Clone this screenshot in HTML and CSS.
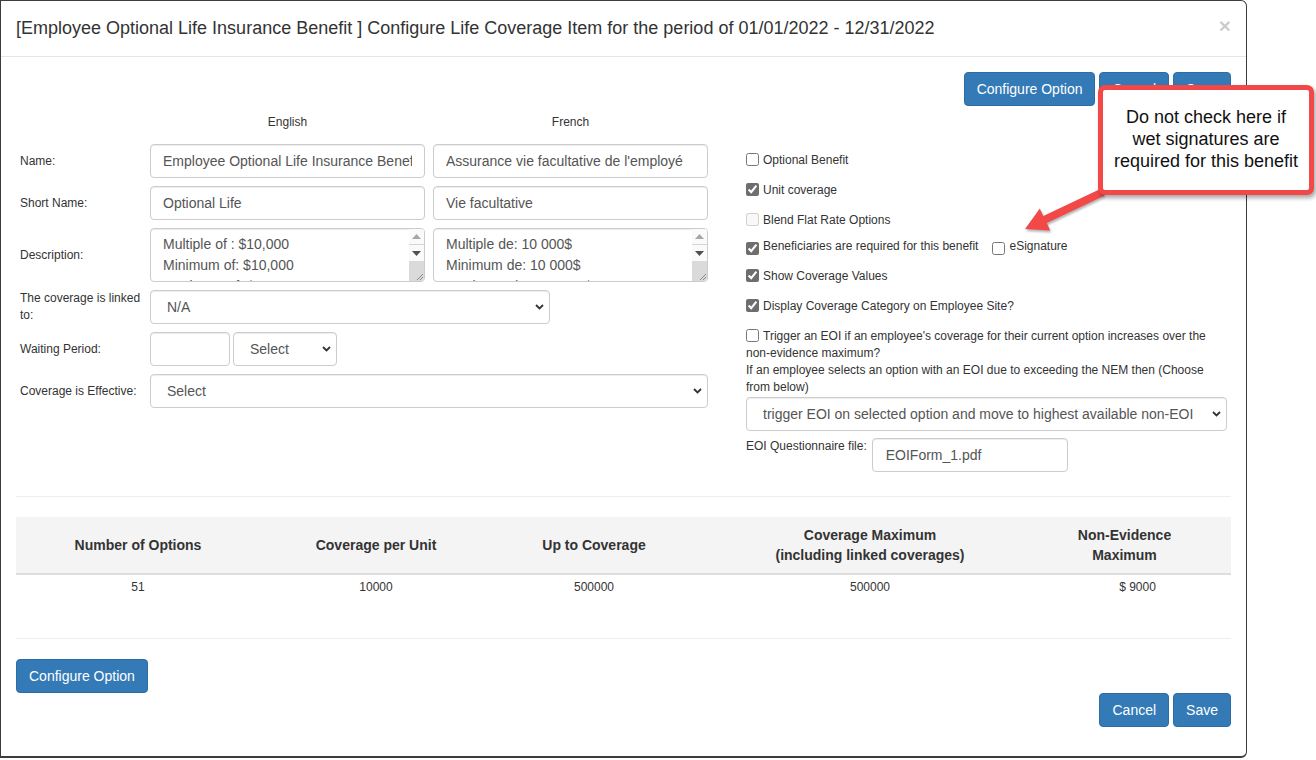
FILE: index.html
```html
<!DOCTYPE html>
<html>
<head>
<meta charset="utf-8">
<link rel="stylesheet" href="styles.css">
</head>
<body>
<div class="modal">
  <div class="modal-header">
    <h4 class="title">[Employee Optional Life Insurance Benefit ] Configure Life Coverage Item for the period of 01/01/2022 - 12/31/2022</h4>
    <span class="close">×</span>
  </div>
  <div class="modal-body">
    <div class="actions">
      <button class="btn">Configure Option</button>
      <button class="btn">Cancel</button>
      <button class="btn">Save</button>
    </div>

    <div class="form-area">
      <div class="left-col">
        <div class="lang-row"><span class="lang">English</span><span class="lang">French</span></div>
        <div class="frow">
          <label class="flabel">Name:</label>
          <input class="fc w275" type="text" value="Employee Optional Life Insurance Benefit">
          <input class="fc w275" type="text" value="Assurance vie facultative de l'employé">
        </div>
        <div class="frow">
          <label class="flabel">Short Name:</label>
          <input class="fc w275" type="text" value="Optional Life">
          <input class="fc w275" type="text" value="Vie facultative">
        </div>
        <div class="frow">
          <label class="flabel">Description:</label>
          <div class="ta">
            <div class="ta-text">Multiple of : $10,000
Minimum of: $10,000
Maximum of: $500,000</div>
            <div class="sb">
              <div class="sb-btn"><svg width="9" height="5" viewBox="0 0 9 5"><path d="M0 5 L4.5 0 L9 5 Z" fill="#a6a6a6"/></svg></div>
              <div class="sb-btn sb-down"><svg width="9" height="5" viewBox="0 0 9 5"><path d="M0 0 L9 0 L4.5 5 Z" fill="#505050"/></svg></div>
              <div class="sb-thumb"><svg width="8" height="8" viewBox="0 0 8 8"><path d="M1 7 L7 1 M4 7 L7 4" stroke="#8a8a8a" stroke-width="1"/></svg></div>
            </div>
          </div>
          <div class="ta">
            <div class="ta-text">Multiple de: 10 000$
Minimum de: 10 000$
Maximum de: 500 000$</div>
            <div class="sb">
              <div class="sb-btn"><svg width="9" height="5" viewBox="0 0 9 5"><path d="M0 5 L4.5 0 L9 5 Z" fill="#a6a6a6"/></svg></div>
              <div class="sb-btn sb-down"><svg width="9" height="5" viewBox="0 0 9 5"><path d="M0 0 L9 0 L4.5 5 Z" fill="#505050"/></svg></div>
              <div class="sb-thumb"><svg width="8" height="8" viewBox="0 0 8 8"><path d="M1 7 L7 1 M4 7 L7 4" stroke="#8a8a8a" stroke-width="1"/></svg></div>
            </div>
          </div>
        </div>
        <div class="frow top">
          <label class="flabel">The coverage is linked to:</label>
          <div class="fc sel w400"><span>N/A</span><svg class="chev" width="9" height="6" viewBox="0 0 9 6"><path d="M1 1 L4.5 4.5 L8 1" fill="none" stroke="#333" stroke-width="1.8"/></svg></div>
        </div>
        <div class="frow wait">
          <label class="flabel">Waiting Period:</label>
          <input class="fc w80" type="text" value="">
          <div class="fc sel w104"><span>Select</span><svg class="chev" width="9" height="6" viewBox="0 0 9 6"><path d="M1 1 L4.5 4.5 L8 1" fill="none" stroke="#333" stroke-width="1.8"/></svg></div>
        </div>
        <div class="frow">
          <label class="flabel">Coverage is Effective:</label>
          <div class="fc sel w558"><span>Select</span><svg class="chev" width="9" height="6" viewBox="0 0 9 6"><path d="M1 1 L4.5 4.5 L8 1" fill="none" stroke="#333" stroke-width="1.8"/></svg></div>
        </div>
      </div>

      <div class="right-col">
        <div class="chk"><input type="checkbox">Optional Benefit</div>
        <div class="chk"><input type="checkbox" checked>Unit coverage</div>
        <div class="chk short"><input type="checkbox" disabled>Blend Flat Rate Options</div>
        <div class="chk"><input class="low" type="checkbox" checked>Beneficiaries are required for this benefit<input class="low esig" type="checkbox">eSignature</div>
        <div class="chk"><input type="checkbox" checked>Show Coverage Values</div>
        <div class="chk"><input type="checkbox" checked>Display Coverage Category on Employee Site?</div>
        <div class="chk multi"><input type="checkbox">Trigger an EOI if an employee's coverage for their current option increases over the non-evidence maximum?<br>If an employee selects an option with an EOI due to exceeding the NEM then (Choose from below)</div>
        <div class="fc sel w481"><span>trigger EOI on selected option and move to highest available non-EOI</span><svg class="chev" width="9" height="6" viewBox="0 0 9 6"><path d="M1 1 L4.5 4.5 L8 1" fill="none" stroke="#333" stroke-width="1.8"/></svg></div>
        <div class="eoi-row">
          <label class="eoi-label">EOI Questionnaire file:</label>
          <input class="fc w196" type="text" value="EOIForm_1.pdf">
        </div>
      </div>
    </div>

    <hr class="sep sep1">

    <table class="grid">
      <thead>
        <tr>
          <th class="c1">Number of Options</th>
          <th class="c2">Coverage per Unit</th>
          <th class="c3">Up to Coverage</th>
          <th class="c4">Coverage Maximum<br>(including linked coverages)</th>
          <th class="c5">Non-Evidence<br>Maximum</th>
        </tr>
      </thead>
      <tbody>
        <tr>
          <td>51</td>
          <td>10000</td>
          <td>500000</td>
          <td>500000</td>
          <td>$ 9000</td>
        </tr>
      </tbody>
    </table>

    <hr class="sep sep2">

    <div class="config-row"><button class="btn">Configure Option</button></div>
    <div class="footer-actions">
      <button class="btn">Cancel</button>
      <button class="btn">Save</button>
    </div>
  </div>
</div>

<svg class="arrow" width="100" height="62" viewBox="0 0 100 62">
  <polygon points="10,49 35.2,50.4 31.7,43.1 89.7,15.6 86.3,8.4 28.3,35.9 24.8,28.6" fill="#f24848"/>
</svg>
<div class="callout">Do not check here if<br>wet signatures are<br>required for this benefit</div>
</body>
</html>
```

FILE: styles.css
```css
* { box-sizing: border-box; }

body {
  margin: 0;
  background: #fff;
  font-family: "Liberation Sans", Arial, sans-serif;
  color: #333;
  width: 1316px;
  height: 760px;
  overflow: hidden;
}

.modal {
  width: 1247px;
  height: 758px;
  border: 1px solid #3c3c3c;
  border-bottom-width: 2px;
  border-radius: 0 6px 6px 0;
  background: #fff;
}

.modal-header {
  display: flex;
  align-items: flex-start;
  padding: 15px 15px 15px 15px;
  border-bottom: 1px solid #e5e5e5;
}

.title {
  margin: 0;
  font-size: 18px;
  font-weight: normal;
  line-height: 25px;
  color: #333;
}

.close {
  margin-left: auto;
  margin-right: 0;
  margin-top: -1px;
  font-size: 21px;
  font-weight: bold;
  line-height: 21px;
  color: #000;
  opacity: 0.2;
}

.modal-body {
  padding: 15px;
}

.btn {
  font-family: "Liberation Sans", Arial, sans-serif;
  font-size: 14px;
  line-height: 20px;
  padding: 6px 12px;
  color: #fff;
  background: #337ab7;
  border: 1px solid #2e6da4;
  border-radius: 4px;
  margin: 0;
}

.actions {
  display: flex;
  justify-content: flex-end;
  gap: 4px;
}

.form-area {
  display: flex;
  gap: 38px;
  margin-top: 8px;
}

.left-col {
  width: 692px;
  padding-left: 4px;
}

.lang-row {
  display: flex;
  gap: 8px;
  margin-left: 130px;
  margin-bottom: 14px;
  font-size: 12px;
  line-height: 16px;
}

.lang {
  width: 275px;
  text-align: center;
}

.frow {
  display: flex;
  align-items: center;
  gap: 8px;
  margin-bottom: 8px;
}

.frow.top {
  align-items: flex-start;
}

.frow.wait {
  gap: 3px;
}

.frow.wait .flabel {
  margin-right: 5px;
}

.flabel {
  width: 122px;
  flex: none;
  font-size: 12px;
  line-height: 17px;
  color: #333;
}

.fc {
  height: 34px;
  border: 1px solid #ccc;
  border-radius: 4px;
  padding: 6px 12px;
  font-family: "Liberation Sans", Arial, sans-serif;
  font-size: 14px;
  line-height: 20px;
  color: #555;
  background: #fff;
  box-shadow: inset 0 1px 1px rgba(0, 0, 0, 0.075);
  margin: 0;
  flex: none;
}

.w275 { width: 275px; }
.w400 { width: 400px; }
.w80 { width: 80px; }
.w104 { width: 104px; }
.w558 { width: 558px; }
.w481 { width: 481px; }
.w196 { width: 196px; }

.sel {
  display: flex;
  align-items: center;
  padding-left: 16px;
  padding-right: 5px;
  white-space: nowrap;
  overflow: hidden;
}

.sel span {
  flex: 1;
  overflow: hidden;
}

.chev {
  flex: none;
  margin-left: 6px;
}

.ta {
  width: 275px;
  height: 54px;
  flex: none;
  display: flex;
  border: 1px solid #ccc;
  border-radius: 4px;
  overflow: hidden;
  box-shadow: inset 0 1px 1px rgba(0, 0, 0, 0.075);
}

.ta-text {
  flex: 1;
  padding: 5px 12px;
  font-size: 14px;
  line-height: 21px;
  color: #555;
  white-space: pre-line;
  overflow: hidden;
}

.sb {
  width: 15px;
  flex: none;
  display: flex;
  flex-direction: column;
  background: #f1f1f1;
}

.sb-btn {
  height: 16px;
  display: flex;
  align-items: center;
  justify-content: center;
  background: #fafafa;
  border-bottom: 1px solid #d4d4d4;
}

.sb-down {
  background: #fafafa;
  border-bottom: none;
}

.sb-thumb {
  flex: 1;
  background: #dadada;
  display: flex;
  align-items: flex-end;
  justify-content: flex-end;
}

.sb-thumb svg {
  display: block;
}

.right-col {
  width: 485px;
  padding-top: 38px;
}

.chk {
  font-size: 12px;
  line-height: 17px;
  height: 17px;
  margin-bottom: 13px;
  color: #333;
  white-space: nowrap;
}

.chk.short {
  margin-bottom: 9px;
}

.chk input {
  width: 13px;
  height: 13px;
  margin: 0 4px 0 0;
  vertical-align: -2px;
  accent-color: #6e6e6e;
}

.chk input.low {
  vertical-align: -5px;
}

.chk input.esig {
  margin-left: 14px;
}

.chk.multi {
  height: auto;
  white-space: normal;
  width: 475px;
  margin-bottom: 1px;
}

.eoi-row {
  display: flex;
  align-items: flex-start;
  gap: 5px;
  margin-top: 7px;
}

.eoi-label {
  font-size: 12px;
  line-height: 17px;
  padding-top: 0;
}

.eoi-row .fc {
  padding-left: 13px;
}

.sep {
  border: none;
  border-top: 1px solid #eee;
  margin: 0;
}

.sep1 {
  margin-top: 24px;
  margin-bottom: 20px;
}

.sep2 {
  margin-top: 38px;
  margin-bottom: 20px;
}

.grid {
  width: 100%;
  border-collapse: collapse;
  table-layout: fixed;
}

.grid th {
  background: #f4f4f4;
  font-size: 14px;
  font-weight: bold;
  line-height: 20px;
  padding: 8px;
  height: 56px;
  text-align: center;
  vertical-align: middle;
  border-bottom: 2px solid #ddd;
  color: #333;
}

.grid .c1 { width: 244px; }
.grid .c2 { width: 232px; }
.grid .c3 { width: 204px; }
.grid .c4 { width: 348px; }
.grid .c5 { width: 187px; padding-right: 34px; }

.grid td {
  font-size: 12px;
  line-height: 17px;
  padding: 4px 8px;
  text-align: center;
  color: #333;
}

.config-row {
  display: flex;
}

.footer-actions {
  display: flex;
  justify-content: flex-end;
  gap: 4px;
}

.callout {
  position: absolute;
  left: 1098px;
  top: 85px;
  width: 216px;
  height: 110px;
  border: 5px solid #f24848;
  border-radius: 7px;
  background: #fff;
  box-shadow: 2px 3px 4px rgba(0, 0, 0, 0.35);
  font-size: 18px;
  line-height: 22px;
  color: #111;
  text-align: center;
  padding-top: 16px;
  white-space: nowrap;
}

.arrow {
  position: absolute;
  left: 1015px;
  top: 180px;
  filter: drop-shadow(1px 2px 1px rgba(0, 0, 0, 0.3));
}
```
